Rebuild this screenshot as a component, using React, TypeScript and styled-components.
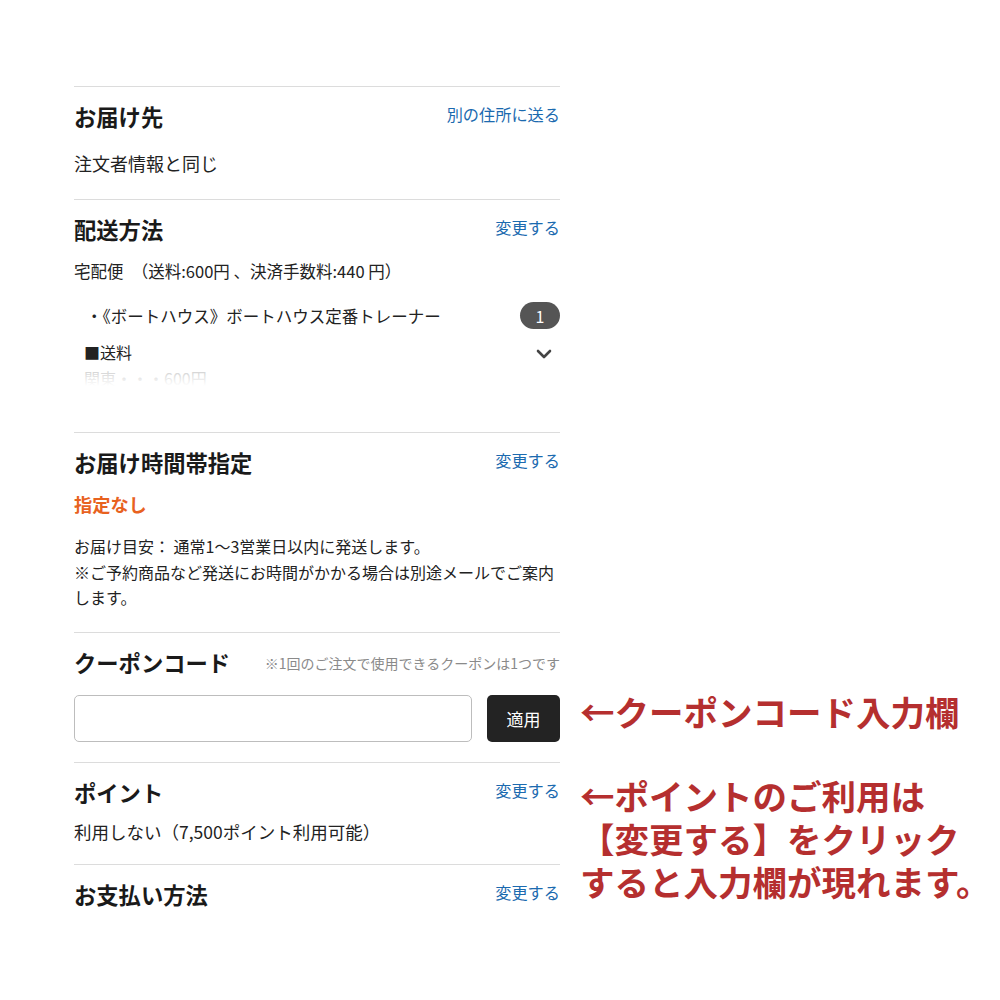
import { FC, ReactNode } from "react";
import { styled, createGlobalStyle } from "styled-components";
import { ChevronDown } from "lucide-react";

const GlobalStyle = createGlobalStyle`
  html, body {
    margin: 0;
    background: #fff;
    font-family: "Noto Sans CJK JP", "Noto Sans", sans-serif;
    color: #222;
  }
`;

const Page = styled.div`
  padding: 86px 0 0 74px;
  width: 486px;
`;

const Section = styled.section<{ $pb: number }>`
  position: relative;
  border-top: 1px solid #dcdcdc;
  padding: 13px 0 ${({ $pb }) => $pb}px;
`;

const Head = styled.div`
  display: flex;
  align-items: center;
  justify-content: space-between;
  height: 32px;
`;

const Title = styled.h2`
  margin: 0;
  font-size: 22.3px;
  font-weight: 700;
  line-height: 32px;
  color: #1a1a1a;
`;

const Link = styled.a`
  font-size: 16.2px;
  color: #1b6aaf;
  line-height: 20px;
  margin-top: -4px;
  cursor: pointer;
`;

const Note = styled.span`
  font-size: 14px;
  color: #8a8a8a;
  margin-top: 2px;
`;

const Text = styled.p<{ $mt: number; $size: number }>`
  margin: ${({ $mt }) => $mt}px 0 0;
  font-size: ${({ $size }) => $size}px;
  line-height: 26px;
  color: #222;
`;

const Emph = styled.p`
  margin: 13px 0 0;
  font-size: 18.2px;
  font-weight: 700;
  line-height: 26px;
  color: #e8621f;
`;

const Notes = styled.p`
  margin: 17px 0 0;
  font-size: 16px;
  line-height: 25.5px;
  color: #222;
`;

const Item = styled.div`
  display: flex;
  align-items: center;
  justify-content: space-between;
  margin-top: 18px;
  padding-left: 12px;
  font-size: 16.5px;
`;

const Badge = styled.span`
  display: inline-flex;
  align-items: center;
  justify-content: center;
  width: 40px;
  height: 27px;
  border-radius: 14px;
  background: #555;
  color: #fff;
  font-size: 16px;
`;

const Fold = styled.div`
  display: flex;
  justify-content: space-between;
  margin-top: 10px;
  padding-left: 10px;
`;

const FoldBody = styled.div`
  position: relative;
  max-height: 47px;
  overflow: hidden;
  font-size: 16px;
  line-height: 26px;
  &::after {
    content: "";
    position: absolute;
    left: 0;
    right: 0;
    bottom: 0;
    height: 24px;
    background: linear-gradient(rgba(255, 255, 255, 0.3), #fff);
  }
`;

const Faded = styled.div`
  color: #999;
`;

const Toggle = styled.span`
  color: #444;
  display: flex;
  margin-top: 3px;
  margin-right: 4px;
`;

const CouponRow = styled.div`
  display: flex;
  gap: 15px;
  margin-top: 17px;
`;

const Input = styled.input`
  flex: 1;
  height: 47px;
  box-sizing: border-box;
  border: 1px solid #bdbdbd;
  border-radius: 5px;
  font-size: 16px;
  padding: 0 12px;
`;

const Apply = styled.button`
  width: 73px;
  height: 47px;
  border: none;
  border-radius: 5px;
  background: #232323;
  color: #fff;
  font-family: inherit;
  font-size: 17px;
`;

const Callout = styled.div<{ $top: number }>`
  position: absolute;
  left: 506px;
  top: ${({ $top }) => $top}px;
  font-size: 34.5px;
  font-weight: 700;
  line-height: 43px;
  color: #b52f2f;
  white-space: nowrap;
`;

const CalloutLine = styled.div`
  height: 43px;
`;

type BlockProps = {
  title: string;
  action?: ReactNode;
  pb: number;
  children?: ReactNode;
};

const Block: FC<BlockProps> = ({ title, action, pb, children }) => (
  <Section $pb={pb}>
    <Head>
      <Title>{title}</Title>
      {action}
    </Head>
    {children}
  </Section>
);

export default function App() {
  return (
    <>
      <GlobalStyle />
      <Page>
        <Block title="お届け先" action={<Link>別の住所に送る</Link>} pb={23}>
          <Text $mt={18} $size={18}>注文者情報と同じ</Text>
        </Block>

        <Block title="配送方法" action={<Link>変更する</Link>} pb={46}>
          <Text $mt={13} $size={16.5}>宅配便　（送料:600円 、決済手数料:440 円）</Text>
          <Item>
            <span>・《ボートハウス》ボートハウス定番トレーナー</span>
            <Badge>1</Badge>
          </Item>
          <Fold>
            <FoldBody>
              <div>■送料</div>
              <Faded>関東・・・600円</Faded>
            </FoldBody>
            <Toggle>
              <ChevronDown size={24} strokeWidth={2.6} />
            </Toggle>
          </Fold>
        </Block>

        <Block title="お届け時間帯指定" action={<Link>変更する</Link>} pb={21}>
          <Emph>指定なし</Emph>
          <Notes>
            お届け目安： 通常1〜3営業日以内に発送します。
            <br />
            ※ご予約商品など発送にお時間がかかる場合は別途メールでご案内します。
          </Notes>
        </Block>

        <Block
          title="クーポンコード"
          action={<Note>※1回のご注文で使用できるクーポンは1つです</Note>}
          pb={20}
        >
          <CouponRow>
            <Input type="text" />
            <Apply>適用</Apply>
          </CouponRow>
          <Callout $top={57}>←クーポンコード入力欄</Callout>
        </Block>

        <Block title="ポイント" action={<Link>変更する</Link>} pb={19}>
          <Text $mt={11} $size={17.5}>利用しない（7,500ポイント利用可能）</Text>
          <Callout $top={11}>
            <CalloutLine>←ポイントのご利用は</CalloutLine>
            <CalloutLine>【変更する】をクリック</CalloutLine>
            <CalloutLine>すると入力欄が現れます。</CalloutLine>
          </Callout>
        </Block>

        <Block title="お支払い方法" action={<Link>変更する</Link>} pb={40} />
      </Page>
    </>
  );
}
